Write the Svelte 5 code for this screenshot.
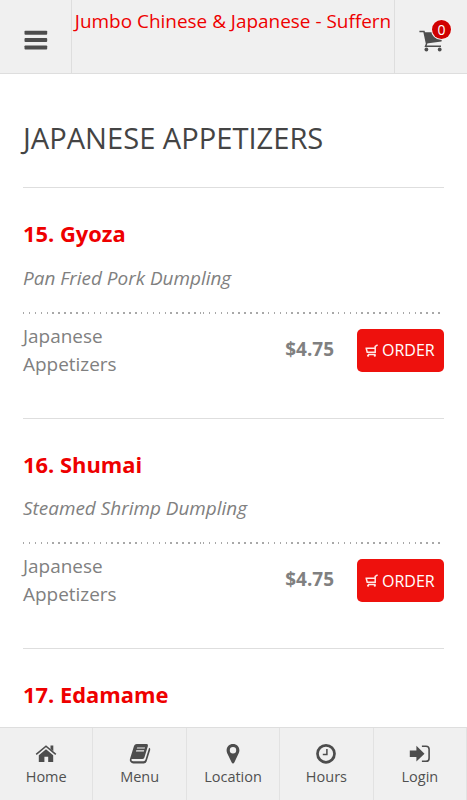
<script>
    const tabs = ['Home', 'Menu', 'Location', 'Hours', 'Login'];

    const items = [
        { number: 15, name: 'Gyoza', description: 'Pan Fried Pork Dumpling', price: '4.75' },
        { number: 16, name: 'Shumai', description: 'Steamed Shrimp Dumpling', price: '4.75' },
        { number: 17, name: 'Edamame', description: '', price: '' }
    ];

    let cartCount = 0;
</script>

<div class="page">
    <header>
        <button class="side menu" aria-label="Open menu">
            <svg width="24" height="20" viewBox="0 0 24 20">
                <rect x="0.5" y="0.7" width="22.7" height="4" rx="0.9" />
                <rect x="0.5" y="8" width="22.7" height="4" rx="0.9" />
                <rect x="0.5" y="15.4" width="22.7" height="4" rx="0.9" />
            </svg>
        </button>
        <div class="brand">Jumbo Chinese &amp; Japanese - Suffern</div>
        <button class="side cart" aria-label="Cart">
            <svg width="26" height="22" viewBox="0 0 26 22">
                <path d="M5.2 2.2H24L22.5 11.6L7.6 13.4Z" />
                <path d="M0.4 1.5H5L7.6 13.8L6.6 16.3H22" fill="none" stroke="#4d4d4d" stroke-width="1.5" />
                <circle cx="7.4" cy="19.5" r="1.9" />
                <circle cx="20.7" cy="19.5" r="1.9" />
            </svg>
            <span class="badge">{cartCount}</span>
        </button>
    </header>

    <main>
        <h1>JAPANESE APPETIZERS</h1>

        {#each items as item}
            <section class="item">
                <h2>{item.number}. {item.name}</h2>
                {#if item.description}
                    <p class="description">{item.description}</p>
                    <div class="details">
                        <div class="category">Japanese Appetizers</div>
                        <div class="price">${item.price}</div>
                        <div class="action">
                            <button class="order">
                                <svg width="13" height="13" viewBox="0 0 13 13">
                                    <path d="M0.5 4.2H9.8M1.2 4.2L2.2 8.2H10.2V2.3L12.6 0.8M3 10.4H10.6" fill="none" stroke="#ffe9e7" stroke-width="1.5" />
                                    <circle cx="3.1" cy="11.7" r="1.1" fill="#ffe9e7" />
                                    <circle cx="9.8" cy="11.7" r="1.1" fill="#ffe9e7" />
                                </svg>
                                <span>ORDER</span>
                            </button>
                        </div>
                    </div>
                {/if}
            </section>
        {/each}
    </main>

    <nav>
        {#each tabs as tab}
            <button class="tab">
                <svg width="22" height="22" viewBox="0 0 22 22">
                    {#if tab === 'Home'}
                        <path d="M3.8 12.2L11 6.2L18.2 12.2V19H13.2V13.8H9.4V19H3.8Z" />
                        <path d="M15.5 2.5H18.3V8.2L15.5 6Z" />
                        <path d="M1.2 11.4L11 3.2L20.8 11.4" fill="none" stroke="#4d4d4d" stroke-width="1.6" />
                    {:else if tab === 'Menu'}
                        <path fill-rule="evenodd" d="M7.7 1H17.6Q19.4 1.2 18.9 3L15.4 14.4Q14.8 16 13.2 16H3Q1.9 16.3 2.6 17.5Q3 18.2 4.2 18.2H14.5Q16 18.1 16.5 16.6L20.1 4.8Q21.6 5.2 21.2 6.9L17.6 18.4Q16.9 20.4 14.8 20.4H4.4Q2 20.4 1 18.3Q0.5 17 1.1 15.4L5 3Q5.7 1.1 7.7 1ZM8.2 4.4L7.8 5.6H15.7L16.1 4.4ZM7.3 7.2L6.9 8.4H14.8L15.2 7.2Z" />
                    {:else if tab === 'Location'}
                        <path fill-rule="evenodd" d="M11 1C14.7 1 17.4 3.7 17.4 7.3Q17.4 9 16.7 10.3L12.3 19.4Q11.9 20.4 11 20.4Q10.1 20.4 9.7 19.4L5.2 10.3Q4.6 9 4.6 7.3C4.6 3.7 7.3 1 11 1ZM11 4.1A3.2 3.2 0 1 0 11 10.5A3.2 3.2 0 1 0 11 4.1Z" />
                    {:else if tab === 'Hours'}
                        <circle cx="11" cy="10.8" r="8.5" fill="none" stroke="#4d4d4d" stroke-width="2.7" />
                        <path d="M11.9 6V11.6H7.8" fill="none" stroke="#4d4d4d" stroke-width="1.5" />
                    {:else}
                        <path d="M0.8 7.4H7.4V2.7L15.5 10.7L7.4 18.6V14H0.8Z" />
                        <path d="M12.9 3.2H17Q20.1 3.2 20.1 6.2V15.2Q20.1 18.3 17 18.3H12.9" fill="none" stroke="#4d4d4d" stroke-width="1.6" />
                    {/if}
                </svg>
                <span>{tab}</span>
            </button>
        {/each}
    </nav>
</div>

<style>
    :global(body) {
        margin: 0;
        background: #fff;
    }

    .page {
        display: flex;
        flex-direction: column;
        height: 800px;
        overflow: hidden;
        color: #808080;
        font-family: "Open Sans", sans-serif;
    }

    button {
        margin: 0;
        padding: 0;
        border: 0;
        background: none;
        font-family: inherit;
    }

    svg {
        display: block;
        fill: #4d4d4d;
    }

    header {
        display: flex;
        flex: none;
        box-sizing: border-box;
        height: 74px;
        border-bottom: 1px solid #dedede;
        background: #f0f0f0;
    }

    .side {
        flex: none;
        box-sizing: border-box;
        width: 73px;
    }

    .menu {
        width: 72px;
        padding: 7px 0 0 24px;
        border-right: 1px solid #dedede;
    }

    .cart {
        position: relative;
        padding: 9px 0 0 24px;
        border-left: 1px solid #dedede;
    }

    .badge {
        position: absolute;
        top: 20px;
        left: 37px;
        width: 19px;
        height: 19px;
        border-radius: 50%;
        background: #d00000;
        box-shadow: 0 0 0 1px #f8f0f0;
        color: #fff;
        font-size: 14px;
        line-height: 20px;
        text-align: center;
    }

    .brand {
        flex: 1;
        color: #ee0000;
        font-size: 18.95px;
        line-height: 43px;
        text-align: center;
        white-space: nowrap;
    }

    main {
        flex: 1;
        min-height: 0;
        padding: 0 23px;
        overflow: hidden;
    }

    h1 {
        margin: 0;
        padding: 43px 0 48px;
        color: #444;
        font-size: 29.1px;
        font-weight: 400;
        line-height: 42px;
        height: 22px;
        white-space: nowrap;
    }

    .item {
        box-sizing: border-box;
        height: 230.7px;
        padding-top: 30px;
        border-top: 1px solid #dedede;
    }

    h2 {
        margin: 0;
        color: #ee0000;
        font-size: 21.9px;
        font-weight: 700;
        line-height: 32px;
    }

    .description {
        margin: 13.6px 0 20px;
        font-size: 18.95px;
        font-style: italic;
        line-height: 28px;
    }

    .details {
        display: grid;
        grid-template-columns: 180px 129px 112px;
        align-items: start;
    }

    .details > div {
        box-sizing: border-box;
        height: 76px;
        padding-top: 10px;
        background: repeating-linear-gradient(90deg, #a8a8a8 0 1.5px, transparent 1.5px 5.9px) 0 0 / 100% 2px no-repeat;
    }

    .category {
        padding-right: 60px;
        font-size: 18.95px;
        line-height: 28px;
    }

    .details > .price {
        padding-top: 23px;
        font-size: 18.95px;
        font-weight: 700;
        line-height: 28px;
        text-align: right;
        text-indent: 2px;
        margin-right: -2px;
    }

    .details > .action {
        padding-top: 17px;
    }

    .order {
        display: flex;
        align-items: center;
        gap: 4px;
        width: 87px;
        height: 43px;
        margin-left: auto;
        padding-left: 8px;
        border-radius: 5px;
        background: #ee110d;
        color: #fff;
        font-size: 16px;
    }

    nav {
        display: flex;
        flex: none;
        box-sizing: border-box;
        height: 73px;
        border-top: 1px solid #dedede;
        background: #f0f0f0;
    }

    .tab {
        display: flex;
        flex: 1;
        flex-direction: column;
        align-items: center;
        padding-top: 15px;
        border-right: 1px solid #e2e2e2;
        color: #505050;
        font-size: 14.5px;
        line-height: 23px;
    }
</style>
